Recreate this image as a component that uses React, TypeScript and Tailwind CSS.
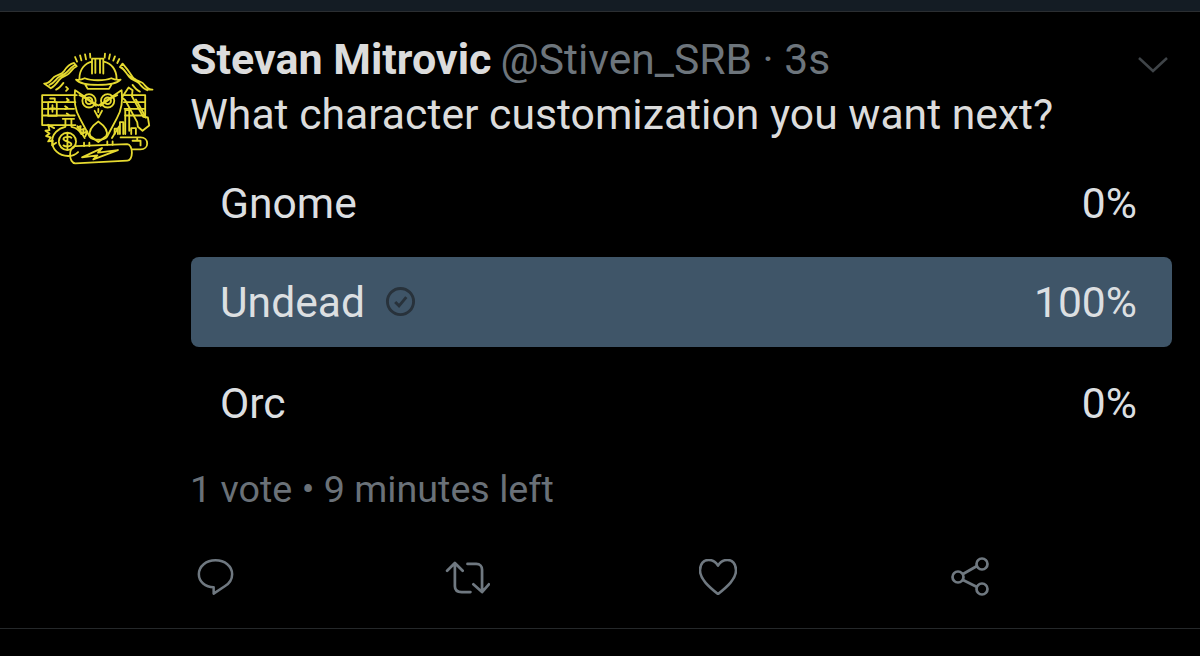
import { ReactNode } from 'react';

const options = [
  { label: 'Gnome', pct: '0%', chosen: false },
  { label: 'Undead', pct: '100%', chosen: true },
  { label: 'Orc', pct: '0%', chosen: false },
];

function Logo() {
  return (
    <svg width="115" height="113" viewBox="60 35 345 340" fill="none" stroke="#e6da30" strokeWidth="5.500" strokeLinejoin="round" strokeLinecap="round">
      {/* rays */}
      <path d="M165 50l6 14M180 45l4 15M195 42l3 15M210 40l1 12M255 40l-1 12M270 42l-3 14M285 48l-5 13M298 56l-6 12" />
      {/* helmet */}
      <path d="M178 116c0-30 18-48 38-52M252 64c22 5 38 24 38 52M216 100V55h34v45M226 58v40M240 58v40" />
      <path d="M168 118c10 12 30 16 66 16s58-5 68-16c-12 2-20 0-28-4-20 8-60 8-80 0-8 4-16 6-26 4zM195 132l8 14h64l8-14" />
      {/* hair */}
      <path d="M72 130c18 0 20-12 30-20s22-6 30-18 14-20 30-24l8 10c-12 6-16 14-24 22s-20 8-28 18-14 20-26 26zM88 134c12-4 18-14 26-22s20-8 28-18 12-14 22-20M108 148c10-4 16-12 22-20" />
      <path d="M398 148c-18 0-20-12-30-20s-22-6-30-18-14-22-30-40l-8 10c12 6 16 14 24 24s20 8 28 18 14 20 26 26zM382 150c-12-4-18-14-26-22s-20-8-28-18-12-18-22-28M360 154c-10-4-16-12-22-20" />
      {/* side panels */}
      <path d="M66 165h104M66 186h100M66 206h96M66 226h98M66 165v90h100M66 186h0" />
      <path d="M310 165h66M312 186h62M314 206h60M316 226h58M376 165v60" />
      {/* bottle on the left */}
      <path d="M90 175h14v10M84 190c0-5 4-5 6-5h14c3 0 6 2 6 6v36H84zM97 195v20M90 205h14" />
      <path d="M138 140l6 6-6 6M140 175l6 5-6 4M135 198l7 5-7 4M140 220l6 4" />
      {/* owl */}
      <path d="M165 150c20 12 45 32 70 46 25-14 50-34 70-46 4 30 0 60-14 84l-30 56c-8 12-44 12-52 0l-30-56c-14-24-18-54-14-84z" />
      <path d="M178 165c20 8 35 20 50 32M292 165c-20 8-35 20-50 32" />
      <circle cx="207" cy="182" r="20" />
      <circle cx="263" cy="182" r="20" />
      <circle cx="207" cy="182" r="10" />
      <circle cx="263" cy="182" r="10" />
      <path d="M224 212l11 20 11-20M235 206v10" />
      <path d="M235 244c20 14 30 30 24 44l-24 18-24-18c-6-14 4-30 24-44z" />
      <path d="M172 258l22 36M298 258l-22 36" />
      {/* wrench and bars */}
      <path d="M326 142l12 8-2 18 34 62 14 2 4 24-20 16-14-12-2-14-36-66-10-8z" />
      <path d="M348 178l30 54" />
      <path d="M284 282v-16h10v16M300 282v-36h10v36M316 282v-72h12v62M334 282v-18h14v18" />
      {/* flask with coin */}
      <path d="M128 236h34M136 236v24c-22 4-40 22-40 44 0 24 20 44 48 44 12 0 22-4 30-12M154 236v24c12 2 24 10 30 22" />
      <circle cx="142" cy="304" r="26" />
      <path d="M154 293c-6-5-24-4-24 4s24 7 24 15-16 9-24 4M142 280v48" />
      <path d="M102 264l-18-10 4 16-12 2 12 8-10 8 14 4-8 12 14-2-2 14 12-8M172 262l10-4-2 12 12-4-4 14 14-6-6 14" />
      {/* pipe */}
      <path d="M302 292h60c12 0 20 8 20 18s-8 18-20 18h-26M338 302h24v14M352 292v10" />
      {/* battery with bolt */}
      <path d="M166 318l156-6c8 0 14 12 14 26s-6 24-14 24l-156 8c-10 0-16-12-16-26s6-26 16-26z" />
      <path d="M192 318v-10M208 318v-10M262 314v-10M278 314v-10" />
      <path d="M186 352l60-28-12 14 60-8-74 28 12-12z" />
    </svg>
  );
}

function Action({ children }: { children: ReactNode }) {
  return <div className="w-[48px] h-[48px] flex items-center justify-center">{children}</div>;
}

export default function App() {
  return (
    <div className="w-[1200px] h-[656px] bg-black flex flex-col overflow-hidden font-['Roboto',sans-serif]">
      <div className="h-[12px] shrink-0 bg-[#141c24] border-b border-b-[#2b2e31]" />

      <div className="flex flex-1 pl-[40px]">
        <div className="w-[115px] shrink-0 mt-[40px]">
          <Logo />
        </div>

        <div className="w-[981px] ml-[36px] shrink-0">
          <div className="flex items-center h-[40px] mt-[27px] text-[42.6px] leading-[40px] whitespace-nowrap">
            <span className="-ml-[1px] text-[43px] font-bold text-[#dcdcdc]">Stevan Mitrovic</span>
            <span className="ml-[9px] text-[#6d757c]">@Stiven_SRB · 3s</span>
            <svg className="ml-auto mr-[4px] mt-[10px]" width="30" height="17" viewBox="0 0 30 17" fill="none" stroke="#3f4448" strokeWidth="2.500">
              <path d="M1 2l14 13L29 2" />
            </svg>
          </div>

          <div className="-ml-[1px] text-[42.7px] leading-[44px] mt-[13px] text-[#dcdcdc] whitespace-nowrap">
            What character customization you want next?
          </div>

          <div className="mt-[21px] flex flex-col gap-[10px]">
            {options.map(o => (
              <div
                key={o.label}
                className={`h-[90px] pl-[29px] pr-[35px] rounded-[8px] flex items-center justify-between text-[42.6px] text-[#dcdfe1] ${o.chosen ? 'bg-[#3f5568]' : ''}`}
              >
                <span className={`flex items-center ${o.chosen ? 'pt-[1px]' : 'pt-[3px]'}`}>
                  {o.label}
                  {o.chosen && (
                    <svg className="ml-[20px] -mt-[1px]" width="31" height="31" viewBox="0 0 32 32" fill="none" stroke="#28323b" strokeWidth="3">
                      <circle cx="16" cy="16" r="13.500" />
                      <path d="M10.500 16.500l4 4 7.500-9" strokeWidth="3" />
                    </svg>
                  )}
                </span>
                <span className={o.chosen ? 'pt-[1px]' : 'pt-[3px]'}>{o.pct}</span>
              </div>
            ))}
          </div>

          <div className="-ml-[1px] mt-[20px] text-[37.7px] leading-[44px] text-[#6a7178] whitespace-nowrap">
            1 vote • 9 minutes left
          </div>

          <div className="mt-[42px] flex">
            <div className="w-[252px]">
              <Action>
                <svg width="37" height="38" viewBox="0 0 40 40" fill="none" stroke="#6f7880" strokeWidth="2.700" strokeLinejoin="round">
                  <path d="M20 2c10 0 18 6 18 15 0 6-3 10-8 13l-12 8v-7C9 31 2 25 2 17 2 8 10 2 20 2z" />
                </svg>
              </Action>
            </div>
            <div className="w-[251px]">
              <Action>
                <svg width="45" height="33" viewBox="0 0 46 34" fill="none" stroke="#6f7880" strokeWidth="2.800" strokeLinecap="round" strokeLinejoin="round">
                  <path d="M2 10l8-8 8 8M10 3v23c0 4 3 6 7 6h9M23 3h9c4 0 6 3 6 6v23M29 24l9 8 7-8" />
                </svg>
              </Action>
            </div>
            <div className="w-[252px]">
              <Action>
                <svg width="38" height="36" viewBox="0 0 40 38" fill="none" stroke="#6f7880" strokeWidth="2.700" strokeLinejoin="round">
                  <path d="M20 7c3-5 7-6 10-6 5 0 9 4 9 11 0 9-9 17-19 25C10 29 1 21 1 12 1 5 5 1 10 1c3 0 7 1 10 6z" />
                </svg>
              </Action>
            </div>
            <div>
              <Action>
                <svg width="38" height="40" viewBox="0 0 38 40" fill="none" stroke="#6f7880" strokeWidth="2.700">
                  <circle cx="7" cy="20" r="5.500" />
                  <circle cx="31" cy="7" r="5.500" />
                  <circle cx="31" cy="32" r="5.500" />
                  <path d="M12 17l14-8M12 23l14 7" />
                </svg>
              </Action>
            </div>
          </div>
        </div>
      </div>

      <div className="h-[28px] shrink-0 border-t border-t-[#25282a]" />
    </div>
  );
}
